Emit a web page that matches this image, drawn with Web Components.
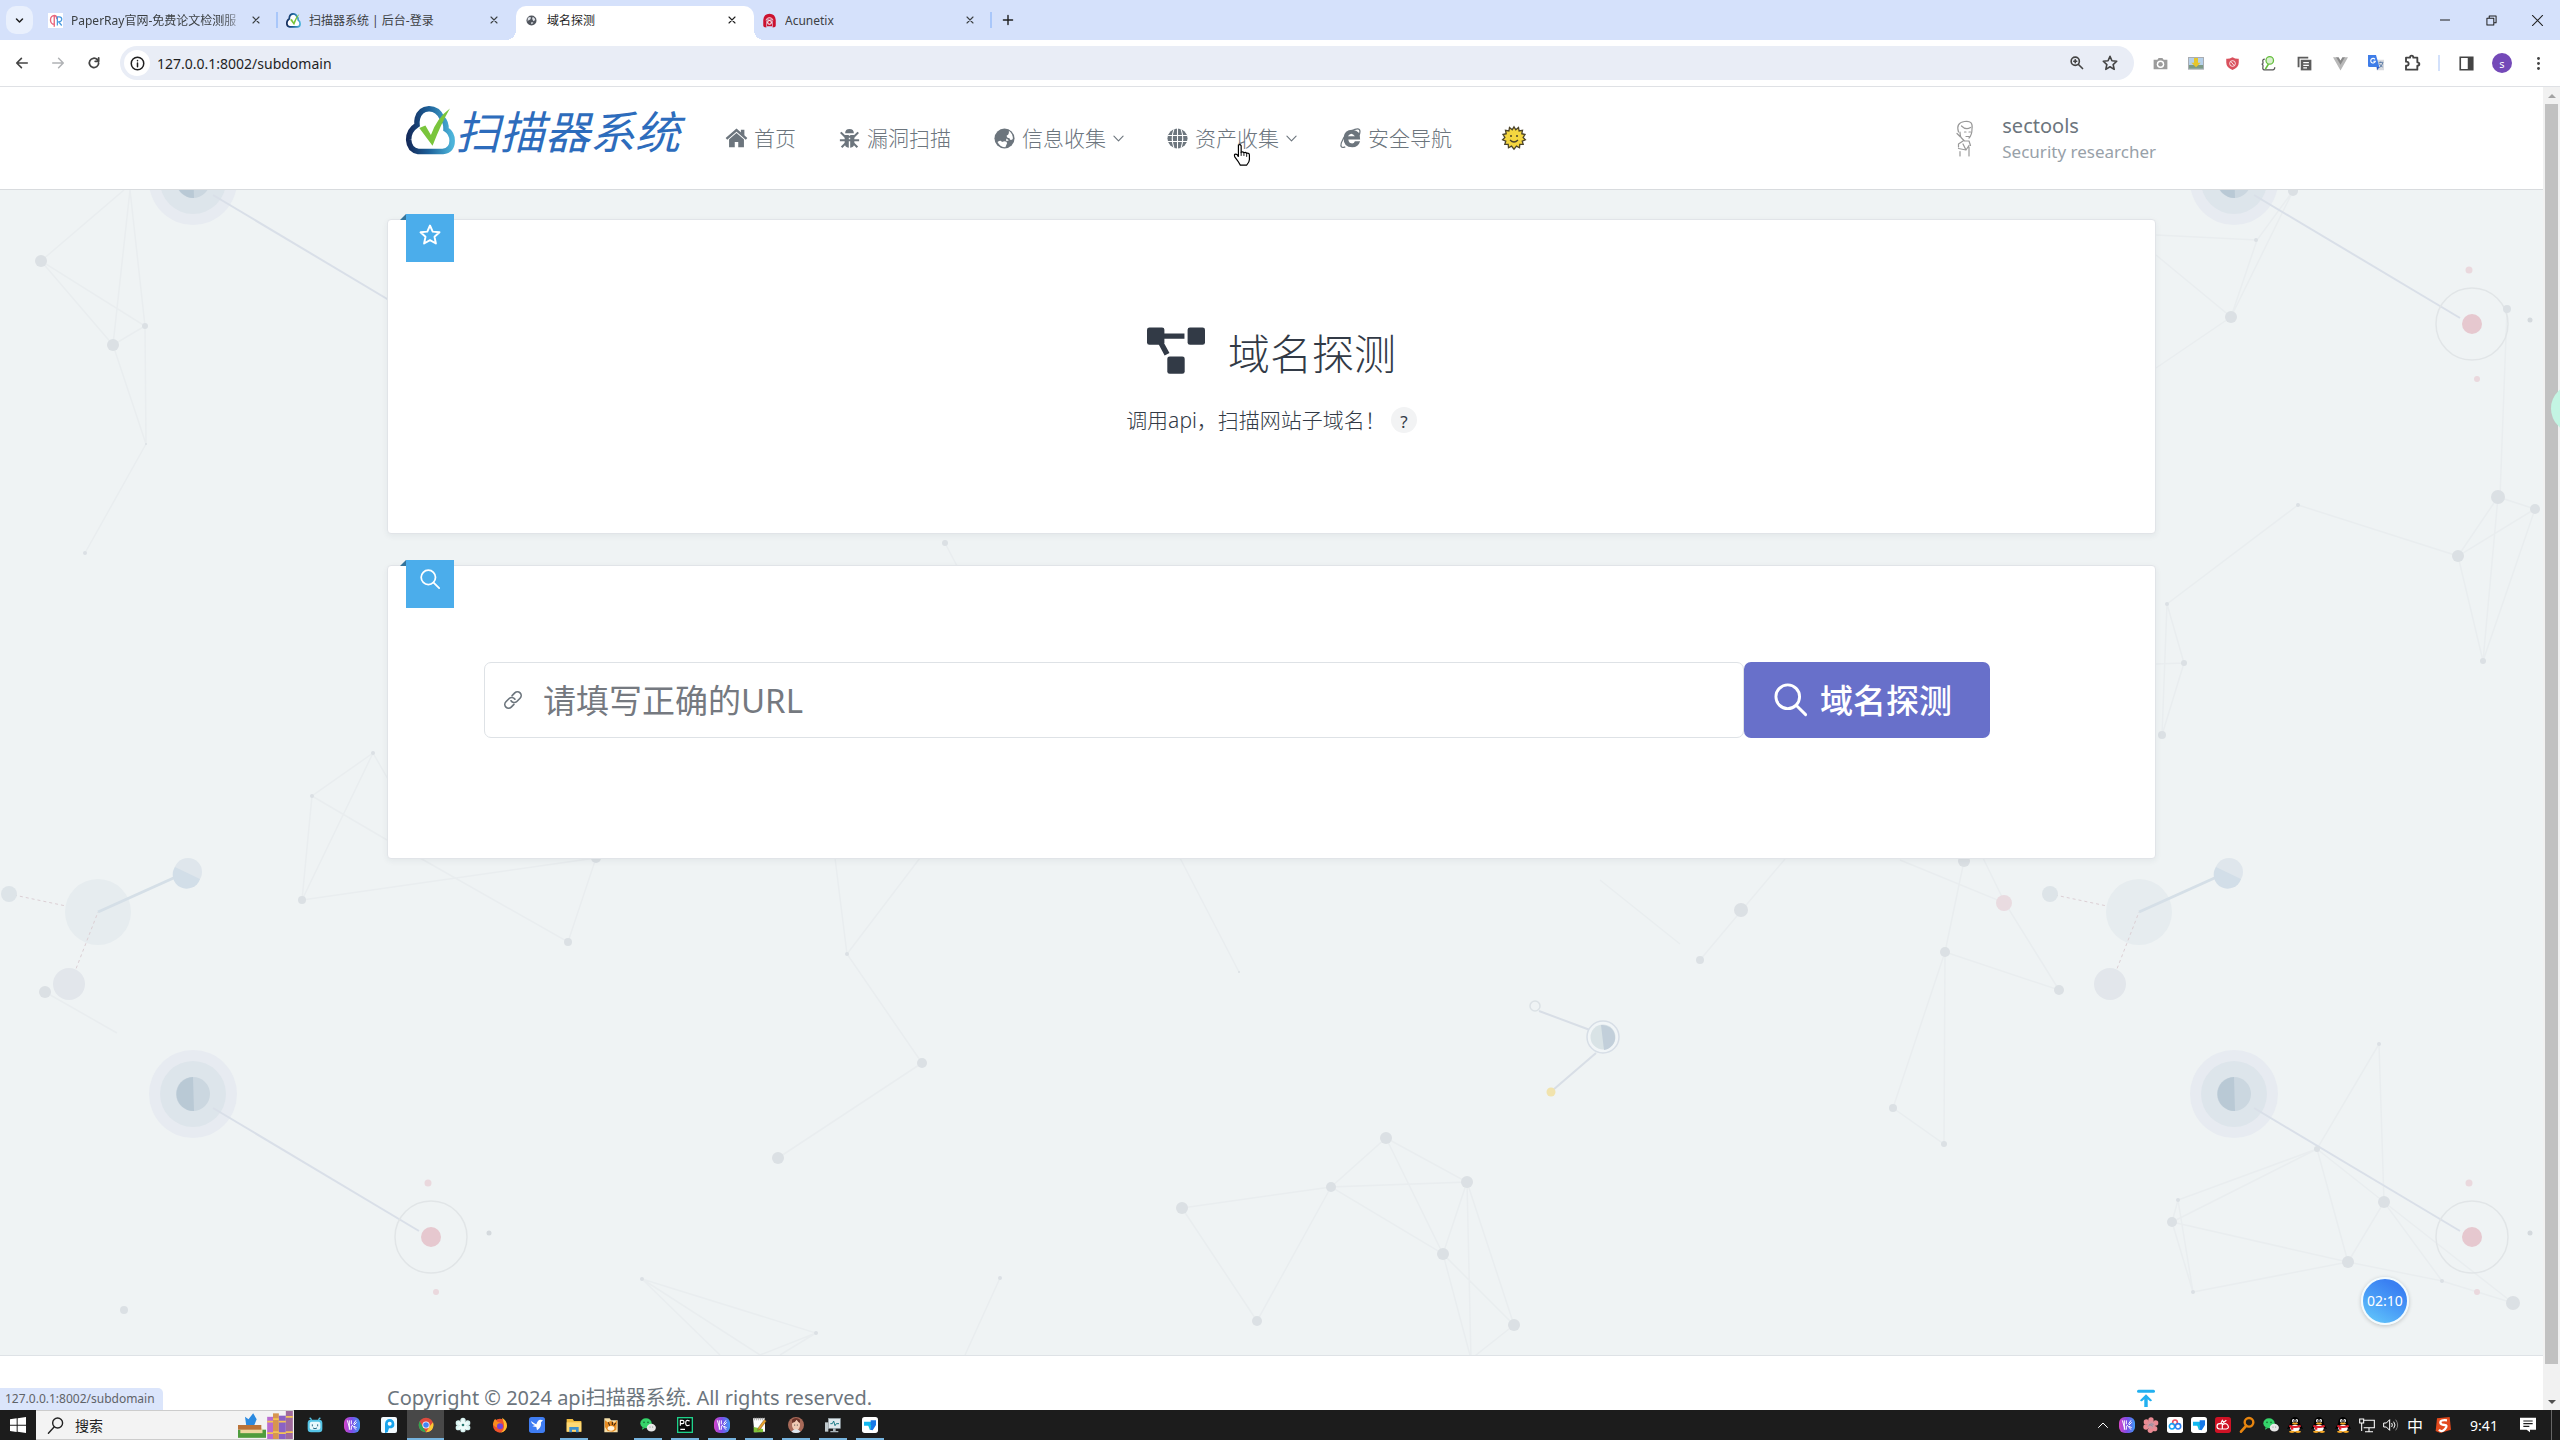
<!DOCTYPE html>
<html lang="zh-CN">
<head>
<meta charset="utf-8">
<title>域名探测</title>
<style>
  html, body { margin: 0; height: 100%; }
  body { font-family: "Noto Sans", "Noto Sans CJK SC", sans-serif; overflow: hidden; }
</style>
</head>
<body>
<scan-desktop></scan-desktop>
<script>
const define = (name, html, setup) => {
  const tpl = document.createElement('template');
  tpl.innerHTML = html;
  customElements.define(name, class extends HTMLElement {
    constructor() {
      super();
      this.attachShadow({ mode: 'open' }).append(tpl.content.cloneNode(true));
    }
    connectedCallback() { if (setup && !this.ready) { this.ready = true; setup.call(this, this.shadowRoot); } }
  });
};

const S = (w, body) => `<g fill="none" stroke="currentColor" stroke-width="${w}" stroke-linecap="round" stroke-linejoin="round">${body}</g>`;
const PENGUIN = `<path d="M3 12L0 18l4-1zM21 12l3 6-4-1z" fill="#000"/><ellipse cx="12" cy="14" rx="9" ry="8" fill="#000"/><ellipse cx="12" cy="7.500" rx="7" ry="7.500" fill="#000"/><ellipse cx="12" cy="17" rx="7" ry="5.500" fill="#fff"/><ellipse cx="9.500" cy="5.500" rx="2" ry="2.600" fill="#fff"/><ellipse cx="14.500" cy="5.500" rx="2" ry="2.600" fill="#fff"/><circle cx="10.200" cy="6" r="1" fill="#000"/><circle cx="13.800" cy="6" r="1" fill="#000"/><ellipse cx="12" cy="9.700" rx="4.500" ry="1.500" fill="#f5a623"/><path d="M4 11.500q8 4 16 0l1 3q-9 4-18 0z" fill="#e0202e"/><path d="M6 14h3.500v5H6z" fill="#e0202e"/><ellipse cx="7.500" cy="22.300" rx="4.500" ry="1.700" fill="#f5a623"/><ellipse cx="16.500" cy="22.300" rx="4.500" ry="1.700" fill="#f5a623"/>`;
const BARS = `<defs><linearGradient id="g" x1="0" y1="0" x2="1" y2="0"><stop offset="0" stop-color="#d646c8"/><stop offset=".5" stop-color="#7a4de8"/><stop offset="1" stop-color="#3f9bf5"/></linearGradient></defs><rect width="24" height="24" rx="9" fill="url(#g)"/><path d="M5 5l4 14M8 5v14M11 5v6M11 13v6M14 11l4-6M12 12l6 7M15 12l4-4M15 14l4 2" stroke="#fff" stroke-width="1.500" fill="none"/>`;
const WECHAT = `<ellipse cx="9" cy="9.500" rx="8.500" ry="7.500" fill="#35d46a"/><path d="M4 15l-1 4 4-2z" fill="#35d46a"/><circle cx="6" cy="8" r="1.200" fill="#14642e"/><circle cx="12" cy="8" r="1.200" fill="#14642e"/><ellipse cx="17" cy="16" rx="6.800" ry="5.800" fill="#e8e8e8"/><circle cx="15" cy="15" r=".9" fill="#888"/><circle cx="19" cy="15" r=".9" fill="#888"/>`;
const TODO = `<rect width="24" height="24" rx="4" fill="#fff"/><path d="M3 7h12l-2 6H3z" fill="#12b7f0"/><path d="M13 5h8v7l-5 8-4-1 1-7z" fill="#1677e8"/><path d="M9 12h5l-2 8z" fill="#0fc0e0"/>`;
const GLOBE = `<circle cx="12" cy="12" r="11.500"/>`;

const ICONS = {
  chevron: S(4, '<path d="M4 8l8 8 8-8"/>'),
  thin: S(2.400, '<path d="M2 7l10 10L22 7"/>'),
  up: S(2, '<path d="M3 17l9-9 9 9"/>'),
  close: S(3.400, '<path d="M3 3l18 18M21 3L3 21"/>'),
  wclose: S(2.200, '<path d="M1 1l22 22M23 1L1 23"/>'),
  plus: S(3.400, '<path d="M12 1v22M1 12h22"/>'),
  min: S(2.400, '<path d="M1 12h22"/>'),
  restore: S(2.200, '<path d="M2 7h15v15H2zM7 7V2h15v15h-5"/>'),
  back: S(2.800, '<path d="M21 12H4M11 4l-8 8 8 8"/>'),
  fwd: S(2.600, '<path d="M3 12h17M13 4l8 8-8 8"/>'),
  reload: S(3, '<path d="M20 12a8 8 0 1 1-2.500-6L20 8.500M20 3v6h-6"/>'),
  info: S(2.400, '<circle cx="12" cy="12" r="10"/><path d="M12 11v6M12 7v.5"/>'),
  lens: S(2.800, '<circle cx="9" cy="9" r="7"/><path d="M14.500 14.500l7 7M9 6.500v5M6.500 9h5"/>'),
  star: S(2.400, '<path d="M12 2l2.900 6.700 7.200.7-5.400 4.900 1.600 7.200-6.300-3.800-6.300 3.800 1.600-7.200L1.900 9.400l7.200-.7z"/>'),
  camera: `<path d="M1 6h6l2-3h6l2 3h6v15H1z" fill="#9b9b9b"/><circle cx="12" cy="13" r="6" fill="#fff"/><circle cx="12" cy="13" r="3.600" fill="#9b9b9b"/>`,
  picture: `<rect x="0" y="3" width="24" height="19" fill="#a9adb2"/><rect x="1.500" y="4.500" width="21" height="16" fill="#b5d0ea"/><path d="M1.500 15h21v5.500h-21z" fill="#7c9a86"/><path d="M9 4.500h6v7h4l-7 7-7-7h4z" fill="#e6c62b"/>`,
  shield: `<path d="M12 2q5 3 10 2.500v6q0 8-10 12Q2 18.500 2 10.500v-6Q7 5 12 2z" fill="#d9515d"/><circle cx="12" cy="12" r="4.600" fill="none" stroke="#fff" stroke-width="1.300"/><path d="M9.500 9l5 6" stroke="#fff" stroke-width="1.300"/>`,
  finder: `<path d="M6 5Q2 5 3 9t-2 4q3 0 2 5t5 4h11q3 0 3-4" fill="none" stroke="#555" stroke-width="2"/><circle cx="14" cy="7" r="6" fill="#d9f0cf" stroke="#63bd3b" stroke-width="2"/><path d="M12 13l-5 8" stroke="#63bd3b" stroke-width="2.600"/>`,
  copy: `<path d="M1 1h17v3H4v14H1z" fill="#5c5c5c"/><path d="M6 6h17v17H6z" fill="#5c5c5c"/><path d="M10 10.500h9M10 15h9M10 19h6" stroke="#fff" stroke-width="1.800"/>`,
  vue: `<path d="M0 2h6l6 10 6-10h6L12 23z" fill="#b8b8b8"/><path d="M5 2h4l3 5 3-5h4l-7 12z" fill="#888"/>`,
  translate: `<path d="M9 7h15v16H13z" fill="#d9dbe0"/><path d="M16 11h7M19 10v2M22 12q-1 5-5 7M17 13q2 4 5 5" stroke="#5f7fa8" stroke-width="1.500" fill="none"/><path d="M0 0h12l5 18H2q-2 0-2-2z" fill="#3f7de8"/><path d="M13 18h4l-3 5z" fill="#2a56c6"/><path d="M10.500 6.500A3.500 3.500 0 1 0 11 9.500H8" fill="none" stroke="#fff" stroke-width="1.600"/>`,
  puzzle: S(2.800, '<path d="M3 4h6q0-3 2.500-3T14 4h6v7q3 0 3 2.500T20 16v6H3v-6q4 0 4-3t-4-3z"/>'),
  panel: `<path d="M2 2h20v20H2z" fill="none" stroke="#444" stroke-width="2.600"/><path d="M14 2h8v20h-8z" fill="#444"/>`,
  dots: `<circle cx="12" cy="4" r="2.300"/><circle cx="12" cy="12" r="2.300"/><circle cx="12" cy="20" r="2.300"/>`,
  fpaper: `<rect width="24" height="24" fill="#fff"/><path d="M10 4a6 7 0 1 0 0 14M10 4v18M10 4q4 0 4 6" fill="none" stroke="#e8667d" stroke-width="2.200"/><path d="M15 20V6h3q4 0 4 4t-5 4l5 6" fill="none" stroke="#4a9be0" stroke-width="2"/>`,
  cloud: `<defs><linearGradient id="c" x1="0" x2="1"><stop offset="0" stop-color="#152c5c"/><stop offset=".45" stop-color="#1c5f98"/><stop offset="1" stop-color="#4cb4da"/></linearGradient></defs><path d="M6 22.300h12q4.600-.6 4.600-5.300 0-3.600-3-5.600.2-3.400-2-5.600Q15.500 1.200 11.200 1.300 6.800 1.500 5.600 6q-.4 1.700-.2 3.300Q1.200 12 1.300 16.600 1.600 21.500 6 22.300z" fill="#fff" stroke="url(#c)" stroke-width="2.700"/><path d="M6.500 10.800l3-1.200 2.700 4.600Q15 6 21.500 1.200 17 9 13 19.500z" fill="#7ac53c"/>`,
  fglobe: `<circle cx="12" cy="12" r="8" fill="#50555d"/><path d="M6 8q5-3 5 0t-4 4-1 1zM14 6q4 2 4 5l-3 2-2-4zM11 15q4-1 4 1l-3 2z" fill="#dfe2e8"/>`,
  acu: `<path d="M2 20V11Q3 1 12 1t10 10v9q0 3-5 3v-9q0-5-5-5t-5 5v9q-5 0-5-3z" fill="#cc1230"/><path d="M12 10q4 0 4 5v6H8v-6q0-5 4-5z" fill="#cc1230"/><circle cx="12" cy="15" r="3" fill="none" stroke="#fff" stroke-width="1.800"/><path d="M6 11q6-7 12 0" stroke="#fff" stroke-width="1.500" fill="none"/>`,
  home: `<path d="M12 4l8.500 7.500V22H14v-6h-4v6H3.500V11.500z"/><path d="M1 12.500L12 3l11 9.500" fill="none" stroke="#fff" stroke-width="4"/><path d="M.5 12.500L12 2.500l11.500 10" fill="none" stroke="currentColor" stroke-width="2.800"/><path d="M17 2h4v7l-4-3z"/>`,
  bug: `<path d="M7 6q0-5 5-5t5 5z"/><path d="M6.500 8h4.700v14.500Q6.500 22 6.500 17zM17.500 8h-4.700v14.500q4.700-.5 4.700-5.500z"/><path d="M2 5l5 5h10l5-5M1 14h22M3 22l5-5M21 22l-5-5" fill="none" stroke="currentColor" stroke-width="2.400"/>`,
  earth: `${GLOBE}<path d="M17 3q5 4 4.500 9.500-3 3-4-1-3 0-3-3 3-1 2.500-5.500zM4 16q4-3 5 0 5-2 6 1l-2 5Q7 22 4 16zM14 12l3 2-3 1z" fill="#fff"/>`,
  globe: `${GLOBE}<path d="M1 8.500h22M1 15.500h22M12 0v24M8 1q-4 11 0 22M16 1q4 11 0 22" fill="none" stroke="#fff" stroke-width="1.200"/>`,
  ie: `<path d="M6 13h17q1-10-9-11Q5 2 4 11q0 11 10 11 7 0 9-7h-6q-1 3-4 2.500T9.500 13z"/><path d="M9 9.500q4-6 8 0z" fill="#fff"/><path d="M22 8q3-9-5-6.500Q6 5 1.500 17q-2 7 4.500 4.500" fill="none" stroke="currentColor" stroke-width="1.400"/>`,
  sun: `<path d="M12 .8l1.800 3 2.700-2.300.6 3.500 3.400-.7-.7 3.400 3.200.8-1.900 2.900 2.300 2.400-3.200 1.300 1 3.300-3.400-.1-.3 3.500-3-1.700L12 23.200l-2.500-3.100-3 1.700-.3-3.500-3.400.1 1-3.300L.6 13.800l2.300-2.400L1 8.500l3.200-.8-.7-3.400 3.400.7.600-3.500 2.700 2.300z" fill="#f4d640" stroke="#4b432a" stroke-width="1.300"/><circle cx="9" cy="10" r="1" fill="#4b432a"/><circle cx="15" cy="10" r="1" fill="#4b432a"/><path d="M8 14q4 4 8 0" fill="none" stroke="#4b432a" stroke-width="1.200"/>`,
  person: S(.8, '<path d="M7 8Q5 2 11 1t5 5q0 4-2 6M9 4q3 3 6 1M8 8q0 3 1 4M6 9l2 2M11 8h1M14 8h1M12 11h2M9 12l2 2h3M10 14l-3 2v2M14 14l1 3M7 19l5 1-2-4M12 20l2-3M8 21v3M14 18v6"/>'),
  diagram: `<rect x="0" y="1" width="7.200" height="7.200" rx="1"/><rect x="16.800" y="1" width="7.200" height="7.200" rx="1"/><rect x="8.400" y="13" width="7.200" height="7.200" rx="1"/><path d="M7 3.500h8.500v2.200H7zM4.800 8l2-1 2.500 4.600-2 1z"/>`,
  outline: S(1.900, '<path d="M12 2.500l2.700 6.100 6.800.7-5 4.500 1.400 6.700-5.900-3.400-5.900 3.400 1.400-6.700-5-4.500 6.800-.7z"/>'),
  search: S(2.100, '<circle cx="10" cy="10" r="8.600"/><path d="M16.300 16.300l6.700 6.700"/>'),
  link: S(2, '<g transform="rotate(-45 12 12)"><path d="M9 16.500H4.500a4.500 4.500 0 0 1 0-9H10a4.500 4.500 0 0 1 4.300 5.500M15 7.500h4.500a4.500 4.500 0 0 1 0 9H14a4.500 4.500 0 0 1-4.300-5.500"/></g>'),
  top: `<rect x="0" y="1" width="24" height="4" rx="2"/><path d="M12 7l8 8q-1 2-3 1l-2.700-2.500V24H9.700V13.500L7 16q-2 1-3-1z"/>`,
  win: `<path d="M0 3.500L10 2v9.500H0zM11.500 1.800L24 0v11.500H11.500zM0 13h10v9.500L0 21zM11.500 13H24v11l-12.500-1.800z" fill="#fff"/>`,
  find: S(2, '<circle cx="15" cy="8.500" r="7"/><path d="M10 14L2 23"/>'),
  bili: `<rect x="1" y="4" width="22" height="19" rx="5" fill="#55c4e6"/><path d="M7 4L4 1M17 4l3-3" stroke="#55c4e6" stroke-width="2"/><rect x="4" y="7" width="16" height="12" rx="3" fill="#e7f8fd"/><path d="M8 11v3M16 11v3M9 16.500q3 2 6 0" stroke="#2c6c86" stroke-width="1.500" fill="none"/>`,
  bars: BARS,
  pcircle: `<rect width="24" height="24" rx="3" fill="#f3fbff"/><path d="M6 24V10Q7 3 13 3t7 7-8 7l-2 6z" fill="#18a5ee"/><circle cx="13" cy="10" r="3" fill="#fff"/>`,
  chrome: `<circle cx="12" cy="12" r="11" fill="#dd4b3e"/><path d="M2.500 6.500L8 16l4 7A11 11 0 0 1 2.500 6.500z" fill="#2fa653"/><path d="M12 23l5-8.500L22.500 8A11 11 0 0 1 12 23z" fill="#fcc934"/><circle cx="12" cy="12" r="5.400" fill="#fff"/><circle cx="12" cy="12" r="4.200" fill="#4285f4"/>`,
  atom: `<g fill="#d8f3f1"><circle cx="12" cy="5" r="4"/><circle cx="12" cy="19" r="4"/><circle cx="5" cy="9" r="4"/><circle cx="19" cy="9" r="4"/><circle cx="5" cy="16" r="4"/><circle cx="19" cy="16" r="4"/></g><path d="M12 2l3 6 6 0-4 5 4 5h-6l-3 4-3-4H3l4-5-4-5h6z" fill="#eefbfa"/><circle cx="12" cy="12" r="2" fill="#25776f"/>`,
  firefox: `<circle cx="12" cy="13" r="10.500" fill="#f0532c"/><path d="M15 1q7 4 7.500 12-1 8-9 10.500Q22 17 15 1z" fill="#fdbd2e"/><path d="M1.500 12Q2 5 5 3l3 4q5 0 7 4-1 6-6 5t-7-4z" fill="#fb8c1e"/><circle cx="12" cy="14" r="4.500" fill="#7543d9"/>`,
  bird: `<rect width="24" height="24" rx="4" fill="#3f7df2"/><path d="M3 6q7 5 8 5 2-7 6-7l4 1-3 3q1 8-6 12l-1-5-6-1 4-2q-5-1-6-6z" fill="#fff"/>`,
  folder: `<path d="M1 3h9l2 3h11v16H1z" fill="#f0bb3f"/><path d="M1 8h22v14H1z" fill="#ffd975"/><path d="M5 23v-8h14v8h-4v-4H9v4z" fill="#3f90ce"/>`,
  tiger: `<path d="M2 2h8l2 3h10v18H2z" fill="#f6dfa8"/><path d="M3 5l4 3 5-2 5 3 4-4-1 14-5 3-8-1-4-6z" fill="#e88c22"/><path d="M8 8l2 5M14 7v5M19 9l-3 4" stroke="#3a2411" stroke-width="1.600"/><ellipse cx="12" cy="17" rx="5" ry="3.500" fill="#fff4dd"/>`,
  wechat: WECHAT,
  pycharm: `<rect width="24" height="24" fill="#1fd28b"/><rect x="2" y="2" width="20" height="20" fill="#0a0a0a"/><path d="M5 13V5h3q2.500 0 2.500 2.500T8 10H5M19 6q-6-3-6 3t6 3M5 18.500h7" stroke="#fff" stroke-width="1.700" fill="none"/>`,
  note: `<path d="M3 2h18v20l-16 1z" fill="#fff"/><path d="M5 1v4M8 1v4M11 1v4M14 1v4M17 1v4M20 1v4" stroke="#999" stroke-width="1.200"/><path d="M4 15l14 3v5H4z" fill="#81c43a"/><path d="M20 4l3 2-9 12-4 2 1-4z" fill="#e9a22c" stroke="#67491d" stroke-width=".7"/>`,
  face: `<circle cx="12" cy="12" r="12" fill="#a86a59"/><ellipse cx="12" cy="12" rx="6" ry="8" fill="#f1cbb5"/><path d="M6 9q5-1 7-5 2 4 5 5V4q-6-5-12 0z" fill="#6b342a"/><circle cx="10" cy="12" r=".9" fill="#333"/><circle cx="14" cy="12" r=".9" fill="#333"/><path d="M5 22q7-7 14 0-7 4-14 0z" fill="#dde6ee"/>`,
  monitor: `<rect x="5" y="2" width="18" height="15" fill="#dfe8ec" stroke="#8d9aa0"/><path d="M8 10h3l2-4 2 7 2-3h4" stroke="#1c7a86" fill="none" stroke-width="1.500"/><path d="M12 17h4v4h4v2H8v-2h4z" fill="#aab5ba"/><rect x="0" y="8" width="5" height="14" fill="#bfc9cd"/>`,
  todo: TODO,
  flower: `<g fill="#ea8a93"><circle cx="12" cy="4.500" r="4"/><circle cx="19" cy="9" r="4"/><circle cx="17.500" cy="17.500" r="4"/><circle cx="11" cy="20" r="4"/><circle cx="4.500" cy="15" r="4"/><circle cx="5" cy="7.500" r="4"/></g><circle cx="12" cy="12" r="6" fill="#d9929c"/><path d="M8 14q3-6 8-3M9 11l6 3" stroke="#8293a6" fill="none" stroke-width="1.400"/>`,
  netdisk: `<rect width="24" height="24" rx="4" fill="#fff"/><g fill="none" stroke-width="2.400"><circle cx="12" cy="8" r="3.500" stroke="#ee4f61"/><circle cx="7.500" cy="14" r="4" stroke="#15a4f4"/><circle cx="16.500" cy="14" r="4" stroke="#2b7df0"/></g>`,
  redcloud: `<rect width="24" height="24" rx="4" fill="#cf1225"/><path d="M7 18q-4 0-4-4t4-4h4v8zM11 12q5-4 8 0 3 5-2 6h-6M9 9l2-4 2 3 4-3" fill="none" stroke="#fff" stroke-width="1.800"/>`,
  key: `<circle cx="15" cy="8" r="6.500" fill="none" stroke="#e8850f" stroke-width="3.600"/><path d="M11 13l-8 9" stroke="#e8850f" stroke-width="4" stroke-linecap="round"/>`,
  qq: PENGUIN,
  net: `<path d="M7 5h16v11H7M15 16v6M9 22h12" fill="none" stroke="#fff" stroke-width="1.600"/><path d="M1 3h6v6H1zM4 9v12" fill="none" stroke="#fff" stroke-width="1.600"/>`,
  vol: `<path d="M1 9h4l5-5v16l-5-5H1z" fill="none" stroke="#fff" stroke-width="1.500"/><path d="M13 9q2 3 0 6M16 7q4 5 0 10" fill="none" stroke="#fff" stroke-width="1.500"/><path d="M19 4q6 8 0 16" fill="none" stroke="#888" stroke-width="1.500"/>`,
  sogou: `<path d="M3 2l19-2 2 19-16 5-7-3z" fill="#e24a1d"/><path d="M18 5Q8 4 8 8t6 4 1 6-9 1" fill="none" stroke="#fff" stroke-width="3.400"/>`,
  msg: `<path d="M0 1h24v18H15v4l-5-4H0z" fill="#fff"/><path d="M5 6h14M5 10h14M5 14h9" stroke="#1c1c1c" stroke-width="1.800"/>`,
  hand: `<path d="M7 1q2-1 3 1v7q2-1 3 .5 2-1 3 .7 3-.7 3 2V17q0 3-3 6H9q-2-4-6-9-1-3 1-3 2 0 3 3z" fill="#fff" stroke="#000" stroke-width="1.300"/><path d="M10 9v4M13 10v3M16 11v3" stroke="#000"/>`,
  books: `<path d="M0 16h24v7H0z" fill="#4f9c3d"/><path d="M2 15h19v4H2z" fill="#ecd8a1"/><path d="M0 12h20v4H0z" fill="#bb7338"/><path d="M6 5l3 2 4-5 3 5-2 5H7z" fill="#2b8ae0"/>`,
  shelf: `<path d="M1 5h5v19H1z" fill="#b86bd0"/><path d="M6 2h5v22H6z" fill="#d8964f"/><path d="M11 4h6v20h-6z" fill="#8a62c4"/><path d="M17 0h6v24h-6z" fill="#a06a9c"/><path d="M1 9h5M6 7h5M11 9h6M17 5h6M1 19h5M6 18h5M11 19h6M17 18h6" stroke="#f3c356" stroke-width="1.500"/>`
};

define('ui-icon', `<style>
  :host { display: inline-block; flex: none; width: var(--s, 24px); height: var(--s, 24px); line-height: 0; }
  svg { width: 100%; height: 100%; fill: currentColor; overflow: visible; }
</style><svg viewBox="0 0 24 24" aria-hidden="true"></svg>`, function (root) {
  root.querySelector('svg').innerHTML = ICONS[this.getAttribute('name')];
  if (this.hasAttribute('size')) this.style.setProperty('--s', this.getAttribute('size') + 'px');
});

const RESET = `* { box-sizing: border-box; } button { font: inherit; color: inherit; background: none; border: 0; padding: 0; display: grid; place-items: center; } a { color: inherit; text-decoration: none; }`;

define('browser-tab', `<style>${RESET}
  :host { position: relative; display: flex; align-items: center; gap: 8px; flex: 0 0 238px; height: 34px; box-sizing: border-box; padding: 0 18px 6px 8px; font-size: 12px; color: #3c4043; }
  .t { flex: 1; overflow: hidden; white-space: nowrap; }
  :host([fade]) .t { -webkit-mask-image: linear-gradient(to right, #000 88%, transparent); }
  :host([active]) { background: #fff; border-radius: 10px 10px 0 0; color: #1f1f1f; }
  :host([active])::before, :host([active])::after { content: ""; position: absolute; bottom: 0; width: 10px; height: 10px; }
  :host([active])::before { left: -10px; background: radial-gradient(circle at 0 0, transparent 10px, #fff 10px); }
  :host([active])::after { right: -10px; background: radial-gradient(circle at 100% 0, transparent 10px, #fff 10px); }
  :host([line]) { background: linear-gradient(#a9c7fa, #a9c7fa) right 6px / 2px 16px no-repeat; }
</style><slot name="icon"></slot><span class="t"><slot></slot></span><button aria-label="关闭"><ui-icon name="close" size="8"></ui-icon></button>`);

define('tab-strip', `<style>${RESET}
  :host { display: flex; align-items: end; height: 40px; background: #d5e1fb; padding-left: 6px; color: #1f1f1f; }
  .menu { width: 27px; height: 28px; border-radius: 10px; background: #e9f0fd; margin: 0 7px 6px 0; }
  .new { width: 32px; height: 34px; padding-bottom: 6px; }
  .win { margin-left: auto; display: flex; height: 40px; }
  .win button { width: 46px; }
</style>
<button class="menu" aria-label="搜索标签页"><ui-icon name="chevron" size="9"></ui-icon></button>
<browser-tab fade line><ui-icon slot="icon" name="fpaper" size="15"></ui-icon>PaperRay官网-免费论文检测服</browser-tab>
<browser-tab><ui-icon slot="icon" name="cloud" size="15"></ui-icon>扫描器系统 | 后台-登录</browser-tab>
<browser-tab active><ui-icon slot="icon" name="fglobe" size="15"></ui-icon>域名探测</browser-tab>
<browser-tab line><ui-icon slot="icon" name="acu" size="15"></ui-icon>Acunetix</browser-tab>
<button class="new" aria-label="新标签页"><ui-icon name="plus" size="10"></ui-icon></button>
<div class="win"><button aria-label="最小化"><ui-icon name="min" size="10"></ui-icon></button><button aria-label="还原"><ui-icon name="restore" size="11"></ui-icon></button><button aria-label="关闭"><ui-icon name="wclose" size="11"></ui-icon></button></div>`);

define('address-bar', `<style>${RESET}
  :host { display: flex; align-items: center; height: 47px; background: #fff; border-bottom: 1px solid #dfe1e5; color: #444; padding: 0 4px; box-sizing: border-box; }
  button { width: 36px; height: 34px; }
  .dim { color: #b0b2b5; }
  .box { flex: 1; display: flex; align-items: center; height: 34px; border-radius: 17px; background: #e9edf6; margin: 0 8px; padding: 0 8px 0 4px; }
  .site { width: 26px; height: 26px; border-radius: 13px; background: #fff; color: #1f1f1f; }
  input { flex: 1; min-width: 0; border: 0; background: none; outline: 0; font: 14px "Noto Sans", sans-serif; color: #1f1f1f; padding: 0 7px; }
  .box .r { width: 33px; }
  i { width: 2px; height: 16px; background: #d3e1fb; margin: 0 8px; }
  .me { width: 20px; height: 20px; border-radius: 10px; background: #7449b8; color: #fff; font-size: 11px; margin: 0 8px; }
</style>
<button aria-label="后退"><ui-icon name="back" size="14"></ui-icon></button><button class="dim" aria-label="前进"><ui-icon name="fwd" size="14"></ui-icon></button><button aria-label="刷新"><ui-icon name="reload" size="14"></ui-icon></button>
<div class="box"><button class="site" aria-label="网站信息"><ui-icon name="info" size="15"></ui-icon></button><input aria-label="地址" value="127.0.0.1:8002/subdomain"><button class="r" aria-label="缩放"><ui-icon name="lens" size="14"></ui-icon></button><button class="r" aria-label="收藏"><ui-icon name="star" size="16"></ui-icon></button></div>
<button aria-label="截图"><ui-icon name="camera" size="15"></ui-icon></button><button aria-label="图片"><ui-icon name="picture" size="16"></ui-icon></button><button aria-label="防护"><ui-icon name="shield" size="15"></ui-icon></button><button aria-label="查找"><ui-icon name="finder" size="15"></ui-icon></button><button aria-label="复制"><ui-icon name="copy" size="15"></ui-icon></button><button aria-label="Vue"><ui-icon name="vue" size="15"></ui-icon></button><button aria-label="翻译"><ui-icon name="translate" size="16"></ui-icon></button><button aria-label="扩展"><ui-icon name="puzzle" size="16"></ui-icon></button><i></i><button aria-label="侧边栏"><ui-icon name="panel" size="15"></ui-icon></button><button class="me">s</button><button aria-label="菜单"><ui-icon name="dots" size="15"></ui-icon></button>`);

define('nav-item', `<style>${RESET}
  :host { display: block; }
  a { display: flex; align-items: center; gap: 7px; white-space: nowrap; line-height: 32px; }
</style><a href="#"><slot></slot></a>`, function (root) {
  const a = root.querySelector('a');
  const icon = (name, size) => {
    const n = document.createElement('ui-icon');
    n.setAttribute('name', name);
    n.setAttribute('size', size);
    return n;
  };
  a.prepend(icon(this.getAttribute('icon'), 21));
  if (this.hasAttribute('menu')) a.append(icon('thin', 11));
});

define('site-header', `<style>${RESET}
  :host { display: block; background: #fff; border-bottom: 1px solid #d8dbde; box-shadow: 0 1px 2px #0002; position: relative; }
  .in { display: flex; width: min(1769px, 100% - 32px); height: 102px; margin: auto; padding-left: 19px; align-items: center; }
  .logo { display: flex; align-items: center; margin: 0 46px 16px 0; font: italic 400 45px/60px "Noto Sans CJK SC", sans-serif; color: #2d6cbc; }
  nav { display: flex; gap: 43px; font-size: 21px; font-weight: 300; color: #6c757d; }
  .theme { margin-left: 50px; }
  .user { margin-left: auto; display: flex; align-items: center; gap: 18px; color: #6c757d; }
  .user ui-icon { color: #999; }
  .user span { padding-top: 2px; }
  b, small { display: block; font-weight: 400; font-size: 20px; line-height: 26px; }
  small { font-size: 17px; color: #98a1a9; }
</style>
<div class="in"><a class="logo" href="#"><ui-icon name="cloud" size="49"></ui-icon><span>扫描器系统</span></a>
<nav><nav-item icon="home">首页</nav-item><nav-item icon="bug">漏洞扫描</nav-item><nav-item icon="earth" menu>信息收集</nav-item><nav-item icon="globe" menu>资产收集</nav-item><nav-item icon="ie">安全导航</nav-item></nav>
<button class="theme" aria-label="切换主题"><ui-icon name="sun" size="24"></ui-icon></button>
<a class="user" href="#"><ui-icon name="person" size="36"></ui-icon><span><b>sectools</b><small>Security researcher</small></span></a></div>`);

define('ribbon-card', `<style>
  :host { position: relative; display: block; background: #fff; border: 1px solid #e1e4e8; border-radius: 4px; box-shadow: 0 2px 6px #2333440f; box-sizing: border-box; }
  .rib { position: absolute; left: 18px; top: -6px; width: 48px; height: 48px; background: #4badeb; color: #fff; display: flex; justify-content: center; padding-top: 9px; box-sizing: border-box; }
  .rib::before { content: ""; position: absolute; right: 100%; top: 0; border: 3px solid transparent; border-right-color: #35749b; border-bottom-color: #35749b; }
</style><div class="rib"><slot name="badge"></slot></div><slot></slot>`);

define('page-title', `<style>${RESET}
  :host { display: flex; flex-direction: column; align-items: center; padding: 101px 16px 98px; color: #323a46; }
  h1 { display: flex; align-items: center; gap: 23px; margin: 0; font-size: 42px; line-height: 66px; font-weight: 300; }
  p { display: flex; align-items: center; gap: 5px; margin: 18px 0 0; font-size: 21px; line-height: 30px; font-weight: 300; }
  button { width: 26px; height: 26px; border-radius: 13px; background: #f2f3f4; font-size: 17px; font-weight: 400; }
</style><h1><ui-icon name="diagram" size="58"></ui-icon><slot></slot></h1><p><span>调用api，扫描网站子域名！</span><button>?</button></p>`);

define('domain-form', `<style>${RESET}
  :host { display: block; padding: 96px 165px 120px 96px; }
  form { display: flex; height: 76px; margin: 0; }
  .f { flex: 1; display: flex; align-items: center; border: 1px solid #dee2e6; border-radius: 7px; padding-left: 18px; color: #6c757d; }
  label { display: flex; }
  input { flex: 1; min-width: 0; height: 100%; border: 0; outline: 0; background: none; padding: 0 20px; font: 33px "Noto Sans", "Noto Sans CJK SC", sans-serif; color: #6c757d; }
  input::placeholder { color: #757980; opacity: 1; }
  .go { display: flex; align-items: center; gap: 13px; padding: 0 0 2px 30px; flex: 0 0 246px; border-radius: 7px; background: #6870ca; color: #fff; font-size: 33px; font-weight: 500; }
</style><form onsubmit="return false"><div class="f"><label for="url" aria-label="URL"><ui-icon name="link" size="20"></ui-icon></label><input id="url" type="text" placeholder="请填写正确的URL"></div><button class="go"><ui-icon name="search" size="33"></ui-icon>域名探测</button></form>`);

define('network-art', `<style>:host { display: block; position: absolute; inset: 0; overflow: hidden; } svg { display: block; }</style>
<svg width="2543" height="1165" viewBox="0 190 2543 1165" aria-hidden="true"></svg>`, function (root) {
  const N = [[41,261,6],[145,326,3],[113,345,6],[146,444,1],[85,553,2],[373,753,2],[312,796,2],[302,900,4],[568,942,4],[596,858,5],[847,954,2],[922,1063,5],[778,1158,6],[45,992,6],[124,1310,4],[642,1279,2],[816,1333,2],[1000,1278,2],[1182,1208,6],[945,543,3],
    [1386,1138,6],[1331,1187,5],[1467,1182,6],[1443,1254,6],[1514,1325,6],[1257,1321,5],[1471,1359,3],[1741,910,7],[1700,960,4],[1964,861,6],[1945,952,5],[2059,990,5],[1893,1108,4],[1944,1144,3],[2379,1044,2],[2317,1149,3],[2384,1202,6],[2178,1200,2],[2172,1222,5],[2193,1292,2],[2348,1262,6],[2442,1281,2],[2513,1303,7],
    [2293,191,5],[2256,240,2],[2231,317,6],[2507,309,4],[2298,505,2],[2498,497,7],[2535,509,5],[2458,556,6],[2483,661,3],[2167,604,2],[2184,663,3],[2162,735,4],[1239,972,1]];
  const L = 'M41 261L113 345 145 326 41 261 124 190M145 326L130 190 113 345 146 444 145 326M146 444L85 553M373 753L312 796 302 900 373 753 400 800M312 796L387 840M302 900L596 858 568 942 420 858M835 858L847 954 922 1063M847 954L920 858M922 1063L778 1158M45 992L117 1033M642 1279L720 1355M642 1279L760 1355 816 1333 642 1279M816 1333L780 1355M1000 1278L965 1355M1182 1208L1331 1187 1386 1138 1467 1182 1331 1187 1443 1254 1467 1182 1514 1325 1443 1254 1386 1138M1331 1187L1257 1321 1182 1208M1443 1254L1471 1359 1467 1182M1471 1359L1514 1325M1785 859L1742 910 1700 960M1180 858L1239 972M1600 880L1680 944M1900 860L2005 903 2059 990 1945 952 1964 861M1983 858L2005 903M1945 952L1893 1108 1944 1144 1945 952M2379 1044L2317 1149 2178 1200 2193 1292 2172 1222 2178 1200M2379 1044L2384 1202 2317 1149 2348 1262 2384 1202 2442 1281 2348 1262 2193 1292M2172 1222L2348 1262M2317 1149L2172 1222M2442 1281L2513 1303 2384 1202M2293 191L2257 240 2231 317 2293 191M2156 235L2257 240M2156 255L2231 317 2156 368M2507 309L2500 497M2298 505L2167 604 2184 663 2162 735 2167 604M2298 505L2458 556 2498 497 2535 509 2458 556 2483 661 2498 497M2535 509L2483 661M2156 664L2184 663M945 543L957 566';
  const burst = (x, y) => `<g transform="translate(${x} ${y})"><circle r="44" fill="#e7ebf1"/><circle r="33" fill="#dde5eb"/><circle r="17" fill="#cbd7e0"/><path d="M0-17a17 17 0 0 0 1 34z" fill="#b9c9d5"/><path d="M20 14L226 137" stroke="#d9dfe8" stroke-width="2"/><circle cx="238" cy="143" r="36" fill="none" stroke="#e1e5e7" stroke-width="1.500"/><circle cx="238" cy="143" r="10" fill="#e6c8cf"/><g fill="#ead8dd"><circle cx="235" cy="89" r="3.500"/><circle cx="243" cy="198" r="3"/></g><circle cx="296" cy="139" r="2.500" fill="#d4d9dd"/></g>`;
  const mol = x => `<g transform="translate(${x} 912)"><circle r="33" fill="#e6ecef"/><path d="M-84-17L-32-6M-24 62L0 0" stroke="#dccfd4" stroke-dasharray="3 3"/><path d="M0 0L80-36" stroke="#d5dfe7" stroke-width="3"/><circle cx="90" cy="-40" r="14" fill="#dfe6ec"/><path d="M77-45a14 14 0 1 0 25 12z" fill="#d2dee8"/><circle cx="-89" cy="-18" r="8" fill="#dde4e8"/><circle cx="-29" cy="72" r="16" fill="#e2e6eb"/></g>`;
  root.querySelector('svg').innerHTML = `<path d="${L}" fill="none" stroke="#e9edef" stroke-width="1.500"/>` + [[193,181],[193,1094],[2234,181],[2234,1094]].map(p => burst(...p)).join('') + mol(98) + mol(2139) +
    `<g fill="#dbe0e4">${N.map(([x, y, r]) => `<circle cx="${x}" cy="${y}" r="${r}"/>`).join('')}</g>
    <circle cx="2004" cy="903" r="8" fill="#e9dbe0"/><path d="M1539 1011L1590 1030M1596 1053L1553 1090" stroke="#d8dee6" stroke-width="2"/><circle cx="1535" cy="1006" r="5" fill="none" stroke="#dbe1e5" stroke-width="1.500"/><circle cx="1603" cy="1037" r="16" fill="#f1f5f7" stroke="#d7dee6" stroke-width="1.500"/><circle cx="1603" cy="1037" r="12.500" fill="#d9e3e6"/><path d="M1601 1025a12.500 12.500 0 0 1 3 25z" fill="#c2cfda"/><circle cx="1551" cy="1092" r="4.500" fill="#f1e3ad"/>`;
});

define('site-footer', `<style>${RESET}
  :host { display: block; background: #fff; border-top: 1px solid #dee2e6; color: #6c757d; }
  .in { display: flex; justify-content: space-between; align-items: center; width: min(1769px, 100% - 32px); height: 84px; margin: auto; font-size: 20px; line-height: 24px; }
  button { color: #22b0f0; width: 20px; }
</style><div class="in"><span>Copyright © 2024 api扫描器系统. All rights reserved.</span><button aria-label="返回顶部"><ui-icon name="top" size="18"></ui-icon></button></div>`);

define('scroll-rail', `<style>
  :host { display: flex; flex-direction: column; align-items: center; flex: 0 0 17px; background: #f1f1f1; }
  i { flex: 0 0 17px; display: grid; place-items: center; }
  i::before { content: ""; border: 4px solid transparent; border-top: 0; border-bottom: 4px solid #a3a3a3; }
  i:last-child::before { transform: rotate(180deg); border-bottom-color: #505050; }
  b { flex: 1; width: 13px; background: #c1c1c1; margin-bottom: 29px; }
</style><i></i><b></b><i></i>`);

define('page-view', `<style>${RESET}
  :host { position: relative; display: flex; flex: 1; min-height: 0; overflow: hidden; }
  .doc { flex: 1; min-width: 0; display: flex; flex-direction: column; min-height: calc(100% + 30px); align-self: flex-start; }
  main { position: relative; flex: 1; background: #eff3f4; padding-top: 29px; }
  .col { position: relative; display: flex; flex-direction: column; gap: 31px; width: min(1769px, 100% - 32px); margin: auto; }
  .view { flex: 1; min-width: 0; height: calc(100vh - 117px); overflow: hidden; display: flex; }
  .status { position: absolute; left: 0; bottom: 0; height: 22px; padding: 0 8px 0 5px; background: #dbe5fb; border-radius: 0 5px 0 0; font-size: 12px; line-height: 22px; color: #5f6368; }
  .timer { position: absolute; right: 151px; bottom: 85px; width: 48px; height: 48px; border-radius: 24px; border: 2px solid #f2fbff; background: linear-gradient(210deg, #3a80f2 20%, #4a9ef7 55%, #66cdfb); box-shadow: 0 1px 4px #0003; color: #fff; font-size: 14px; line-height: 44px; text-align: center; }
  .mint { position: absolute; right: -40px; top: 297px; width: 49px; height: 49px; border-radius: 25px; background: #c3f5e3; }
  .cursor { position: absolute; left: 1232px; top: 57px; }
</style>
<div class="view"><div class="doc"><site-header></site-header>
<main><network-art></network-art><div class="col">
<ribbon-card><ui-icon slot="badge" name="outline" size="24"></ui-icon><page-title>域名探测</page-title></ribbon-card>
<ribbon-card><ui-icon slot="badge" name="search" size="20"></ui-icon><domain-form></domain-form></ribbon-card>
</div></main><site-footer></site-footer></div></div>
<scroll-rail></scroll-rail><div class="status">127.0.0.1:8002/subdomain</div><div class="timer">02:10</div><div class="mint"></div><ui-icon class="cursor" name="hand" size="22"></ui-icon>`);

define('task-bar', `<style>${RESET}
  :host { display: flex; align-items: stretch; height: 30px; background: #1c1c1c; color: #fff; }
  button { flex: none; }
  .start { width: 36px; }
  .find { display: flex; align-items: center; flex: 0 0 258px; min-width: 0; background: #f3f3f3; color: #222; font-size: 14px; padding-left: 11px; gap: 11px; border: 1px solid #ccc; border-width: 1px 0; }
  input { flex: 1; width: 0; min-width: 0; border: 0; background: none; outline: 0; font: 14px "Noto Sans CJK SC", sans-serif; padding: 0; }
  input::placeholder { color: #222; opacity: 1; }
  .art { display: flex; align-self: stretch; align-items: center; overflow: hidden; }
  .apps { display: flex; padding-left: 2px; }
  .apps button { width: 37px; }
  .apps .on { background: linear-gradient(#76b4df, #76b4df) center bottom / 28px 2px no-repeat; }
  .apps .act { background: linear-gradient(#76b4df, #76b4df) center bottom / 100% 2px no-repeat #484848; }
  .tray { display: flex; margin-left: auto; }
  .tray button { width: 24px; }
  .tray .w { width: 32px; }
  .tray .clock { width: 50px; font-size: 14px; }
  .tray .m { width: 37px; }
  .end { width: 9px; border-left: 1px solid #666; margin-left: 5px; }
</style>
<button class="start" aria-label="开始"><ui-icon name="win" size="16"></ui-icon></button>
<div class="find"><ui-icon name="find" size="17"></ui-icon><input aria-label="搜索" placeholder="搜索"><div class="art"><ui-icon name="books" size="28"></ui-icon><ui-icon name="shelf" size="28"></ui-icon></div></div>
<div class="apps"></div><div class="tray"></div>`, function (root) {
  const btn = (n, cls, size) => `<button class="${cls}" aria-label="${n}"><ui-icon name="${n}" size="${size}"></ui-icon></button>`;
  const idle = ['bili', 'bars', 'pcircle', 'atom', 'firefox', 'bird', 'tiger'];
  root.querySelector('.apps').innerHTML = ['bili', 'bars', 'pcircle', 'chrome', 'atom', 'firefox', 'bird', 'folder', 'tiger', 'wechat', 'pycharm', 'bars', 'note', 'face', 'monitor', 'todo']
    .map((n, i) => btn(n, n === 'chrome' ? 'act' : idle.includes(n) && i < 9 ? '' : 'on', 16)).join('');
  root.querySelector('.tray').innerHTML = btn('up', '', 12) + ['bars', 'flower', 'netdisk', 'todo', 'redcloud', 'key', 'wechat', 'qq', 'qq', 'qq', 'net', 'vol'].map(n => btn(n, '', 16)).join('') +
    `<button>中</button>` + btn('sogou', 'w', 16) + `<button class="clock">9:41</button>` + btn('msg', 'm', 16) + '<span class="end"></span>';
});

define('scan-desktop', `<style>:host { display: flex; flex-direction: column; height: 100vh; overflow: hidden; }</style>
<tab-strip></tab-strip><address-bar></address-bar><page-view></page-view><task-bar></task-bar>`);
</script>
</body>
</html>
